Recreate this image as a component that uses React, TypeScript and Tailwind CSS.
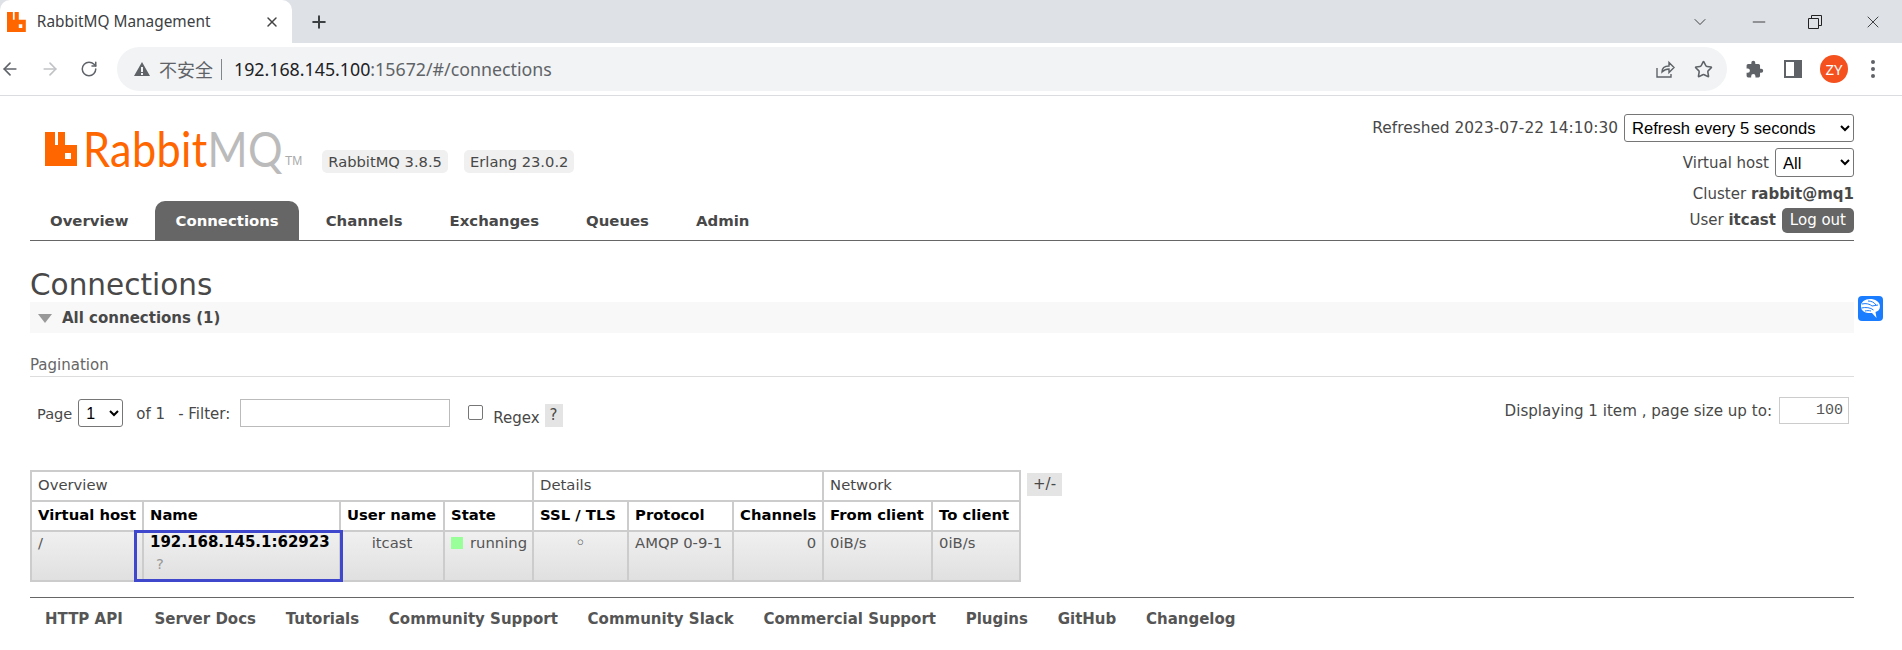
import { ArrowLeft, ArrowRight, ChevronDown, Minus, Plus, RotateCw, Star, X } from 'lucide-react';

const navItems = ['Overview', 'Connections', 'Channels', 'Exchanges', 'Queues', 'Admin'];
const footerLinks = ['HTTP API', 'Server Docs', 'Tutorials', 'Community Support', 'Community Slack', 'Commercial Support', 'Plugins', 'GitHub', 'Changelog'];
const headers = ['Virtual host', 'Name', 'User name', 'State', 'SSL / TLS', 'Protocol', 'Channels', 'From client', 'To client'];

const RabbitIcon = ({ height }: { height: number }) => (
  <svg width={(height * 32) / 34} height={height} viewBox="0 0 32 34" className="shrink-0">
    <path fill="#ff6600" fillRule="evenodd" d="M0 0h10v13h3V0h7v13h12v21H0zM20 21v6h6v-6z" />
  </svg>
);

const Td = ({ children, className = '' }: { children?: React.ReactNode; className?: string }) => (
  <td className={`border-2 border-[#ccc] bg-gradient-to-b from-[#f0f0f0] to-[#e0e0e0] px-[6px] align-top font-normal text-[#555] ${className}`}>
    {children}
  </td>
);

const BrowserChrome = () => (
  <div className="font-['Noto_Sans',sans-serif]">
    <div className="flex h-[43px] items-stretch bg-[#dee1e6]">
      <div className="flex w-[292px] items-center rounded-t-[10px] bg-white pl-[7px] pr-[12px]">
        <RabbitIcon height={20} />
        <span className="ml-[11px] text-[15.4px] text-[#3c4043]">RabbitMQ Management</span>
        <X size={16} strokeWidth={2.2} className="ml-auto text-[#444]" />
      </div>
      <Plus size={20} strokeWidth={2.4} className="ml-[17px] self-center text-[#3c4043]" />
      <div className="ml-auto flex items-center gap-[39px] pr-[19px] text-[#222]">
        <ChevronDown size={20} strokeWidth={1} />
        <Minus size={20} strokeWidth={1} />
        <svg width="14" height="14" viewBox="0 0 14 14" fill="none" stroke="currentColor" strokeWidth="1">
          <path d="M.5 3.5h10v10H.5zM3.5 3.5V.5h10v10h-3" />
        </svg>
        <X size={20} strokeWidth={1} className="ml-[2px]" />
      </div>
    </div>
    <div className="flex h-[53px] items-center border-b border-[#dadce0] bg-white">
      <div className="flex w-[117px] items-center">
        <ArrowLeft size={20} strokeWidth={2} className="text-[#5f6368]" />
        <ArrowRight size={20} strokeWidth={2} className="ml-[20px] text-[#c0c2c5]" />
        <RotateCw size={18} strokeWidth={2} className="ml-[20px] text-[#5f6368]" />
      </div>
      <div className="flex h-[44px] w-[1610px] items-center rounded-full bg-[#f1f3f4] pl-[17px] pr-[14px]">
        <svg width="16" height="14" viewBox="0 0 16 14"><path fill="#5f6368" d="M8 0l8 14H0zM7 5v5h2V5zm0 6v2h2v-2z" fillRule="evenodd" /></svg>
        <span className="ml-[9px] font-['Noto_Sans_CJK_SC',sans-serif] text-[18px] text-[#5f6368]">不安全</span>
        <span className="ml-[8px] mr-[12px] h-[21px] w-px bg-[#80868b]" />
        <span className="text-[17.8px] text-[#202124]">192.168.145.100<span className="text-[#5f6368]">:15672/#/connections</span></span>
        <svg className="ml-auto" width="20" height="20" viewBox="0 0 20 20" fill="none" stroke="#5f6368" strokeWidth="1.4">
          <path d="M2 9v9h14v-3M7 13c0-4 3-6 7-6V3.5l5 5-5 5V10c-3 0-5 1-7 3z" />
        </svg>
        <Star size={19} strokeWidth={2} className="ml-[19px] text-[#5f6368]" />
      </div>
      <div className="flex flex-1 items-center pl-[18px]">
        <svg width="19" height="19" viewBox="0 0 24 24"><path fill="#5f6368" d="M20.5 11H19V7a2 2 0 0 0-2-2h-4V3.5a2.5 2.5 0 0 0-5 0V5H4a2 2 0 0 0-2 2v3.8h1.5a2.7 2.7 0 0 1 0 5.4H2V20a2 2 0 0 0 2 2h3.8v-1.5a2.7 2.7 0 0 1 5.4 0V22H17a2 2 0 0 0 2-2v-4h1.5a2.5 2.5 0 0 0 0-5z" /></svg>
        <svg className="ml-[20px]" width="18" height="18" viewBox="0 0 18 18"><path fill="#5f6368" fillRule="evenodd" d="M0 0h18v18H0zM2 2v14h8V2z" /></svg>
        <span className="ml-[18px] flex size-[28px] items-center justify-center rounded-full bg-[#f4511e] text-[15px] text-white">ZY</span>
        <svg className="ml-[23px]" width="4" height="18" viewBox="0 0 4 18"><g fill="#5f6368"><circle cx="2" cy="2" r="2" /><circle cx="2" cy="9" r="2" /><circle cx="2" cy="16" r="2" /></g></svg>
      </div>
    </div>
  </div>
);

export default function App() {
  return (
    <div className="relative h-[650px] w-[1902px] overflow-hidden bg-white font-['DejaVu_Sans',sans-serif] text-[15px] text-[#484848]">
      <BrowserChrome />

      <div className="pl-[30px] pr-[48px]">
        <div className="flex h-[105px] justify-between">
          <div className="flex items-start pl-[15px] pt-[36px]">
            <RabbitIcon height={34} />
            <span className="ml-[6px] mt-[-3px] w-[197px] whitespace-nowrap font-['Lato',sans-serif] text-[48px] font-normal leading-[40px] tracking-[0.4px] text-[#ff6600]">
              <span className="inline-block origin-left scale-x-90">
                Rabbit<span className="text-[#bbb]">MQ</span>
              </span>
            </span>
            <span className="ml-[5px] mt-[22px] font-['Liberation_Sans',sans-serif] text-[12px] leading-[14px] text-[#aaa]">TM</span>
            <span className="ml-[20px] mt-[18px] rounded-[5px] bg-[#f0f0f0] px-[6px] text-[14.7px] leading-[23px]">RabbitMQ 3.8.5</span>
            <span className="ml-[16px] mt-[18px] rounded-[5px] bg-[#f0f0f0] px-[6px] text-[14.7px] leading-[23px]">Erlang 23.0.2</span>
          </div>
          <div className="flex flex-col items-end pt-[18px]">
            <div className="flex items-center">
              <span className="pt-[2px] text-[15.4px]">Refreshed 2023-07-22 14:10:30</span>
              <select className="ml-[6px] h-[28px] w-[230px] rounded-[3px] border border-[#767676] pl-[3px] font-['Liberation_Sans',sans-serif] text-[16.6px] text-black">
                <option>Refresh every 5 seconds</option>
              </select>
            </div>
            <div className="mt-[6px] flex items-center">
              <span className="pt-[1px]">Virtual host</span>
              <select className="ml-[6px] h-[29px] w-[79px] rounded-[3px] border border-[#767676] pl-[3px] font-['Liberation_Sans',sans-serif] text-[16.5px] text-black">
                <option>All</option>
              </select>
            </div>
          </div>
        </div>

        <div className="relative flex h-[40px] items-stretch gap-[7px] border-b border-[#666]">
          {navItems.map((item) => (
            <div
              key={item}
              className={`flex items-center px-[20px] pt-[1px] text-[14.9px] font-bold ${
                item === 'Connections' ? 'rounded-t-[10px] bg-[#666] text-white' : 'text-[#484848]'
              }`}
            >
              {item}
            </div>
          ))}
          <div className="absolute bottom-[7px] right-0 flex flex-col items-end">
            <span className="mb-[3px]">Cluster <b>rabbit@mq1</b></span>
            <div className="flex items-center">
              <span>User <b>itcast</b></span>
              <span className="ml-[6px] rounded-[5px] bg-[#666] px-[8px] leading-[25px] text-white">Log out</span>
            </div>
          </div>
        </div>

        <h1 className="mt-[28px] text-[29.5px] leading-[33px]">Connections</h1>

        <div className="flex h-[31px] items-center bg-[#f8f8f8] pl-[8px] pt-[1px] font-bold">
          <svg width="14" height="9" viewBox="0 0 14 9" className="mr-[10px]"><path fill="#999" d="M0 0h14L7 9z" /></svg>
          All connections (1)
        </div>

        <div className="mt-[22px] border-b border-[#ddd] pb-[1px] leading-[20px] text-[#666]">Pagination</div>

        <div className="mt-[22px] flex items-start pl-[7px]">
          <span className="mt-[4px] text-[14.6px]">Page</span>
          <select className="ml-[6px] h-[28px] w-[45px] rounded-[3px] border border-[#767676] pl-[3px] font-['Liberation_Sans',sans-serif] text-[16px] text-black">
            <option>1</option>
          </select>
          <span className="ml-[13px] mt-[4px]">of 1</span>
          <span className="ml-[13px] mt-[4px]">- Filter:</span>
          <input className="ml-[10px] h-[28px] w-[210px] border border-[#bbb] bg-white" />
          <input type="checkbox" className="ml-[18px] mt-[6px] size-[15px] appearance-none rounded-[2px] border border-[#767676] bg-white" />
          <span className="ml-[10px] mt-[8px]">Regex</span>
          <span className="ml-[5px] mt-[5px] w-[18px] bg-[#e4e4e4] text-center leading-[23px]">?</span>
          <div className="ml-auto flex items-start">
            <span className="mt-[1px] text-[15.1px]">Displaying 1 item , page size up to:</span>
            <input
              readOnly
              value="100"
              className="ml-[7px] mr-[5px] mt-[-2px] h-[27px] w-[70px] border border-[#ccc] pr-[5px] text-right font-['Liberation_Mono',monospace] text-[15px] text-[#555]"
            />
          </div>
        </div>

        <div className="mt-[40px] flex items-start">
          <div className="relative">
            <table className="w-[989px] table-fixed border-collapse text-[14.8px]">
              <colgroup>
                <col className="w-[112px]" />
                <col className="w-[197px]" />
                <col className="w-[104px]" />
                <col className="w-[89px]" />
                <col className="w-[95px]" />
                <col className="w-[105px]" />
                <col className="w-[90px]" />
                <col className="w-[109px]" />
                <col className="w-[88px]" />
              </colgroup>
              <thead>
                <tr className="h-[30px] text-left font-normal">
                  <th colSpan={4} className="border-2 border-[#ccc] px-[6px] font-normal">Overview</th>
                  <th colSpan={3} className="border-2 border-[#ccc] px-[6px] font-normal">Details</th>
                  <th colSpan={2} className="border-2 border-[#ccc] px-[6px] font-normal">Network</th>
                </tr>
                <tr className="h-[30px] text-left">
                  {headers.map((h) => (
                    <th key={h} className="whitespace-nowrap border-2 border-[#ccc] px-[6px] font-bold text-black">{h}</th>
                  ))}
                </tr>
              </thead>
              <tbody>
                <tr className="h-[50px]">
                  <Td>/</Td>
                  <Td>
                    <div className="whitespace-nowrap text-[15px] font-bold leading-[20px] text-black">192.168.145.1:62923</div>
                    <div className="pl-[6px] leading-[24px] text-[#999]">?</div>
                  </Td>
                  <Td className="text-center">itcast</Td>
                  <Td>
                    <span className="inline-flex items-center whitespace-nowrap">
                      <span className="mr-[7px] size-[12px] bg-[#99ff99]" />
                      running
                    </span>
                  </Td>
                  <Td className="text-center text-[18px] leading-[22px]">◦</Td>
                  <Td className="whitespace-nowrap">AMQP 0-9-1</Td>
                  <Td className="text-right">0</Td>
                  <Td>0iB/s</Td>
                  <Td>0iB/s</Td>
                </tr>
              </tbody>
            </table>
            <div className="absolute left-[104px] top-[60px] h-[52px] w-[209px] border-[3px] border-[#3f48cc]" />
          </div>
          <span className="ml-[6px] mt-[3px] w-[35px] bg-[#e4e4e4] text-center leading-[23px]">+/-</span>
        </div>

        <div className="mt-[15px] flex gap-[29.7px] border-t border-[#666] pl-[15px] pt-[10px] font-bold text-[#555]">
          {footerLinks.map((link) => (
            <span key={link} className="whitespace-nowrap first:mr-[2px]">{link}</span>
          ))}
        </div>
      </div>

      <div className="absolute left-[1858px] top-[296px] flex size-[25px] items-center justify-center rounded-[4px] bg-[#1a7cff]">
        <svg width="21" height="22" viewBox="0 0 21 22">
          <path fill="#fff" d="M10 1c5 0 10 2.500 10 7.500 0 3-2 5-4.500 5.500l1 6-4.500-5c-6 .5-11-1.500-11-6.500C.5 4 5 1 10 1z" />
          <path fill="none" stroke="#1a7cff" strokeWidth="1" d="M2 6c4-1 8 0 10 2M1.500 10c4-1 9-.5 12 2M8 3c3 0 6 1 8 4M12 8l6-1M5 13c2-.5 4-.5 6 0" />
        </svg>
      </div>
    </div>
  );
}
